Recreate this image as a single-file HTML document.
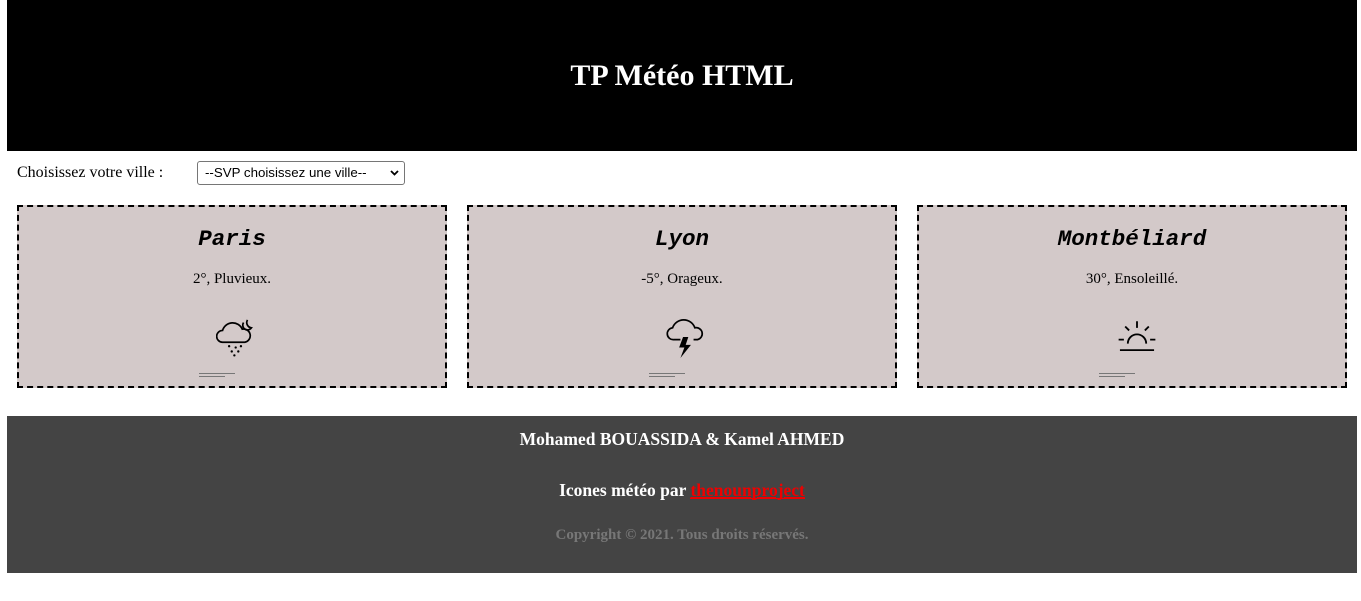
<!DOCTYPE html>
<html><head><meta charset="utf-8"><style>
body{margin:0;width:1361px;height:601px;background:#fff;position:relative;font-family:"Liberation Serif",serif;overflow:hidden}
.hdr{position:absolute;left:7px;top:0;width:1350px;height:151px;background:#000;color:#fff;text-align:center;font-weight:bold;font-size:30px;line-height:151px}
.lbl{position:absolute;left:17px;top:164px;font-size:16px}
.sel{position:absolute;left:197px;top:161px;width:208px;height:24px;border:1px solid #767676;border-radius:3px;box-sizing:border-box;font-family:"Liberation Sans",sans-serif;font-size:13.3px;line-height:22px;padding-left:7px;background:#fff}
.sel svg{position:absolute;right:5px;top:8px}
.card{position:absolute;top:205px;width:430px;height:183px;box-sizing:border-box;border:2px dashed #000;background:#d3c9c9;text-align:center}
.card h2{margin:0;position:absolute;top:19px;width:100%;font-family:"Liberation Mono",monospace;font-style:italic;font-weight:bold;font-size:22.5px}
.card p{margin:0;position:absolute;top:64px;width:100%;font-size:15px}
.card svg.i{position:absolute;left:197px;top:109px}
.cap{position:absolute;left:180px;top:166px;width:38px;height:5px}
.cap i{display:block;height:1px;background:#777;margin-bottom:2px}
.ftr{position:absolute;left:7px;top:416px;width:1350px;height:157px;background:#444;text-align:center;font-weight:bold}
.ftr div{position:absolute;width:100%}
a{color:#e00;text-decoration-line:underline;border-bottom:1px solid #e00;line-height:15px;display:inline-block}
</style></head><body>
<div class="hdr">TP Météo HTML</div>
<div class="lbl">Choisissez votre ville :</div>
<div class="sel">--SVP choisissez une ville--<svg width="9" height="6" viewBox="0 0 9 6"><path d="M1 1l3.5 3.5L8 1" stroke="#000" stroke-width="1.8" fill="none"/></svg></div>

<div class="card" style="left:17px"><h2>Paris</h2><p>2°, Pluvieux.</p>
<svg class="i" width="42" height="42" viewBox="4 4 32 32" fill="none" stroke="#000" stroke-width="1.3"><path d="M9 24a4.5 4.5 0 0 1 0-9a8 8 0 0 1 15-1a5 5 0 0 1 2 10z"/><path d="M25 9a3.5 3.5 0 0 0 6 4a4 4 0 0 1-3-6"/><g fill="#000" stroke="none"><circle cx="14" cy="27" r="0.9"/><circle cx="19" cy="28" r="0.9"/><circle cx="23" cy="27" r="0.9"/><circle cx="16" cy="31" r="0.9"/><circle cx="21" cy="31" r="0.9"/><circle cx="18" cy="34" r="0.9"/></g></svg>
<div class="cap"><i style="width:36px"></i><i style="width:26px"></i></div></div>

<div class="card" style="left:467px"><h2>Lyon</h2><p>-5°, Orageux.</p>
<svg class="i" width="42" height="42" viewBox="4 4 32 32" fill="none" stroke="#000" stroke-width="1.3"><path d="M10 22a4.5 4.5 0 0 1-1-9a9 9 0 0 1 17 0a4.5 4.5 0 0 1 2 9h-3M15 22h-5"/><path d="M17 20l-3 8h4l-3 8l8-10h-4l2-6z" fill="#000" stroke="none"/></svg>
<div class="cap"><i style="width:36px"></i><i style="width:26px"></i></div></div>

<div class="card" style="left:917px"><h2>Montbéliard</h2><p>30°, Ensoleillé.</p>
<svg class="i" width="42" height="42" viewBox="4 4 32 32" fill="none" stroke="#000" stroke-width="1.4"><path d="M13 25a7 7 0 0 1 14 0"/><path d="M7 30h26M20 8v5M11 12l3 3M29 12l-3 3M6 22h4M30 22h4"/></svg>
<div class="cap"><i style="width:36px"></i><i style="width:26px"></i></div></div>

<div class="ftr">
<div style="top:13px;color:#fff;font-size:17.5px">Mohamed BOUASSIDA &amp; Kamel AHMED</div>
<div style="top:64px;color:#fff;font-size:17.5px">Icones météo par <a>thenounproject</a></div>
<div style="top:111px;color:#777;font-size:15px">Copyright © 2021. Tous droits réservés.</div>
</div>
</body></html>
